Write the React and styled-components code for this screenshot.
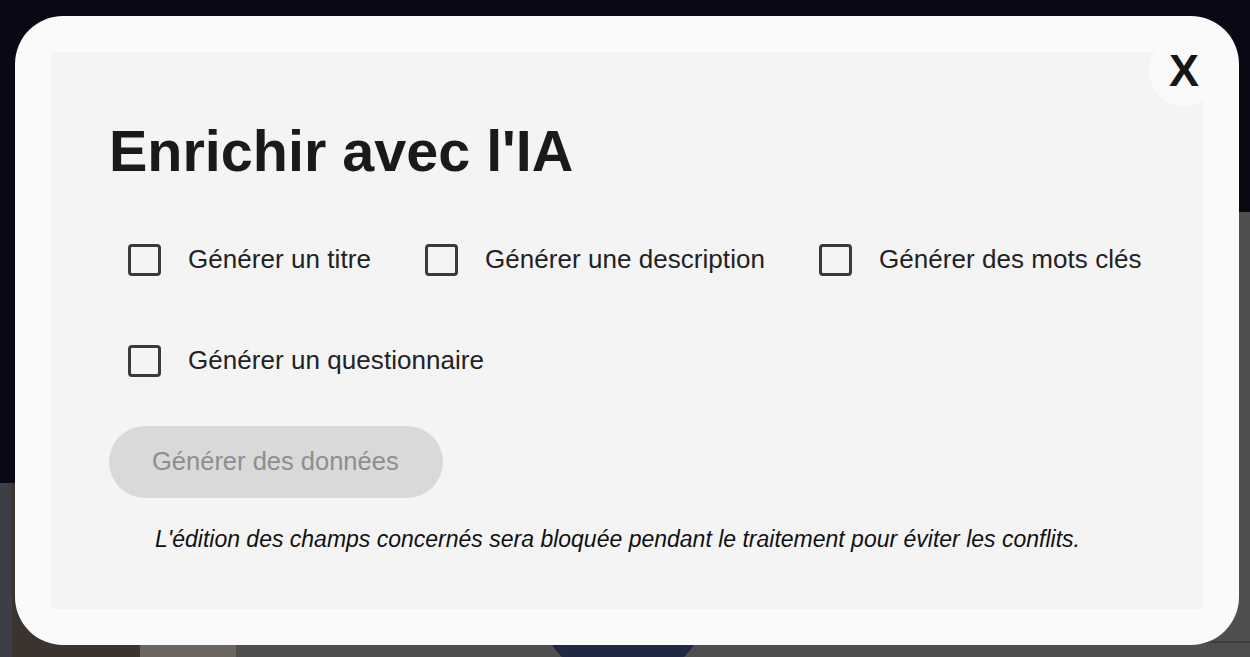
import React from 'react';
import styled, { createGlobalStyle } from 'styled-components';

const GlobalStyle = createGlobalStyle`
  html, body {
    margin: 0;
    padding: 0;
    height: 100%;
    overflow: hidden;
    background: #4e4e4e;
    font-family: "Liberation Sans", Arial, Helvetica, sans-serif;
  }
`;

const OPTIONS = [
  'Générer un titre',
  'Générer une description',
  'Générer des mots clés',
  'Générer un questionnaire',
];

const App = () => (
  <>
    <GlobalStyle />
    <Backdrop>
      <Header />
      <Body>
        <Hero>
          <HeroTop />
          <HeroPhoto />
        </Hero>
        <Content>
          <Card />
          <Footer>
            <FooterLine />
            <Avatar />
            <FooterLine wide />
            <FooterLine />
          </Footer>
        </Content>
      </Body>
    </Backdrop>

    <Overlay>
      <Modal role="dialog" aria-labelledby="ia-title">
        <CloseButton aria-label="Fermer">X</CloseButton>
        <Panel>
          <Title id="ia-title">Enrichir avec l'IA</Title>
          <OptionList>
            {OPTIONS.map(label => (
              <Option key={label}>
                <Box type="checkbox" />
                <OptionLabel>{label}</OptionLabel>
              </Option>
            ))}
          </OptionList>
          <GenerateButton disabled>Générer des données</GenerateButton>
          <Note>
            L'édition des champs concernés sera bloquée pendant le traitement pour éviter les conflits.
          </Note>
        </Panel>
      </Modal>
    </Overlay>
  </>
);

/* dimmed page behind the dialog */

const Backdrop = styled.div`
  height: 100vh;
  display: flex;
  flex-direction: column;
`;

const Header = styled.div`
  height: 212px;
  flex-shrink: 0;
  background: #080914;
`;

const Body = styled.div`
  flex: 1;
  display: flex;
`;

const Hero = styled.div`
  width: 240px;
  display: flex;
  flex-direction: column;
`;

const HeroTop = styled.div`
  height: 271px;
  background: #080914;
`;

const HeroPhoto = styled.div`
  flex: 1;
  background: linear-gradient(90deg, #3d3f47 0 12px, #3a332e 12px 140px, #6b6660 140px);
`;

const Content = styled.div`
  flex: 1;
  display: flex;
  flex-direction: column;
  background: #4e4e4e;
`;

const Card = styled.div`
  flex: 1;
`;

const Footer = styled.div`
  height: 24px;
  display: flex;
  align-items: flex-start;
  gap: 2px;
  padding-left: 132px;
`;

const FooterLine = styled.div`
  width: ${props => (props.wide ? 200 : 173)}px;
  height: 2px;
  margin: 8px ${props => (props.wide ? 170 : 0)}px 0 0;
  background: #3f3f3f;
`;

const Avatar = styled.div`
  width: 160px;
  height: 60px;
  margin-top: -20px;
  border-radius: 0 0 80px 80px;
  background: #212843;
`;

/* dialog */

const Overlay = styled.div`
  position: fixed;
  inset: 0;
  display: flex;
  padding: 16px 11px 12px 15px;
`;

const Modal = styled.div`
  position: relative;
  flex: 1;
  display: flex;
  padding: 36px;
  background: #fafafa;
  border-radius: 48px;
`;

const CloseButton = styled.button`
  position: absolute;
  top: 20px;
  right: 20px;
  width: 70px;
  height: 70px;
  border: none;
  border-radius: 50%;
  background: #fafafa;
  color: #161616;
  font-family: "Liberation Sans", Arial, sans-serif;
  font-weight: 700;
  font-size: 45px;
  line-height: 1;
  padding: 0 0 2px;
  cursor: pointer;
`;

const Panel = styled.div`
  flex: 1;
  display: flex;
  flex-direction: column;
  align-items: flex-start;
  padding: 71px 30px 0 58px;
  background: #f4f4f4;
`;

const Title = styled.h1`
  margin: 0 0 59px;
  font-size: 57.5px;
  line-height: 1;
  font-weight: 700;
  color: #1a1a1a;
`;

const OptionList = styled.div`
  display: flex;
  flex-wrap: wrap;
  column-gap: 54px;
  row-gap: 61px;
  padding-left: 19px;
`;

const Option = styled.label`
  display: flex;
  align-items: center;
  gap: 27px;
  height: 40px;
  cursor: pointer;
`;

const Box = styled.input`
  appearance: none;
  margin: 0;
  width: 33px;
  height: 32px;
  border: 3px solid #3a3a3a;
  border-radius: 4px;
  background: transparent;
`;

const OptionLabel = styled.span`
  font-size: 26px;
  letter-spacing: 0.05px;
  color: #222222;
`;

const GenerateButton = styled.button`
  margin-top: 45px;
  height: 72px;
  padding: 0 44px 0 43px;
  border: none;
  border-radius: 36px;
  background: #d9d9d9;
  color: #8e8e8e;
  font-family: "Liberation Sans", Arial, sans-serif;
  font-size: 25.5px;
`;

const Note = styled.p`
  margin: 30px 0 0;
  padding-left: 46px;
  font-size: 23px;
  line-height: 1;
  font-style: italic;
  color: #111111;
`;

export default App;
